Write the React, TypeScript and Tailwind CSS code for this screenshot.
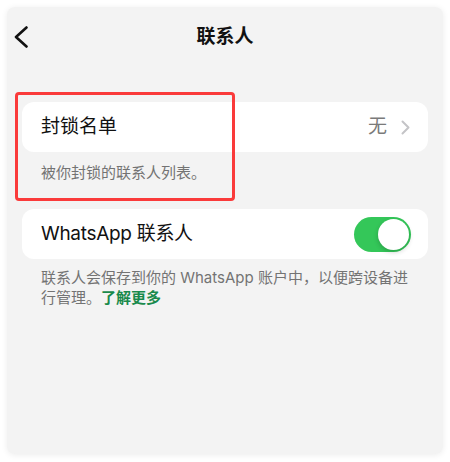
import { useState } from "react"

const font = { fontFamily: '"Inter", "Noto Sans CJK SC", sans-serif' }

function BackIcon() {
  return (
    <svg width="16" height="22" viewBox="0 0 16 22" fill="none">
      <path d="M13.5 1.5 L3 11 L13.5 20.5" stroke="#111" strokeWidth="2.6" strokeLinecap="round" strokeLinejoin="round" />
    </svg>
  )
}

function Chevron() {
  return (
    <svg width="9" height="15" viewBox="0 0 9 15" fill="none">
      <path d="M1.5 1.5 L7.5 7.5 L1.5 13.5" stroke="#c4c4c7" strokeWidth="2" strokeLinecap="round" strokeLinejoin="round" />
    </svg>
  )
}

function Toggle({ on, onChange }: { on: boolean; onChange: () => void }) {
  return (
    <button
      onClick={onChange}
      className={`relative h-[35px] w-[57px] rounded-full transition-colors ${on ? "bg-[#34c759]" : "bg-[#e5e5ea]"}`}
    >
      <span
        className={`absolute top-[2px] h-[31px] w-[31px] rounded-full bg-white shadow-[0_2px_5px_rgba(0,0,0,0.2)] transition-all ${on ? "left-[24px]" : "left-[2px]"}`}
      />
    </button>
  )
}

export default function App() {
  const [synced, setSynced] = useState(true)

  return (
    <div className="min-h-screen bg-white pl-[7px] pt-[7px]" style={font}>
      <div className="h-[447px] w-[436px] rounded-lg bg-[#f3f3f3] shadow-[0_1px_6px_rgba(0,0,0,0.08)]">
        {/* nav bar */}
        <div className="relative flex h-[60px] items-center justify-center">
          <button className="absolute left-[6px] top-[19px]">
            <BackIcon />
          </button>
          <h1 className="text-[19px] font-semibold text-[#111]">联系人</h1>
        </div>

        <div className="px-[15px] pt-[35px]">
          {/* blocked contacts */}
          <div className="relative">
            <div className="flex h-[50px] items-center justify-between rounded-xl bg-white pl-[19px] pr-[18px]">
              <span className="text-[19px] text-[#111]">封锁名单</span>
              <div className="flex items-center gap-[14px]">
                <span className="text-[19px] text-[#7a7a7a]">无</span>
                <Chevron />
              </div>
            </div>
            <p className="mt-[11px] px-[19px] text-[15px] leading-5 text-[#737373]">被你封锁的联系人列表。</p>
            <div className="pointer-events-none absolute left-[-7px] top-[-10px] h-[109px] w-[220px] rounded-[4px] border-[3px] border-[#fa3a3a]" />
          </div>

          {/* whatsapp contacts */}
          <div className="mt-[26px] flex h-[50px] items-center justify-between rounded-xl bg-white pl-[19px] pr-[17px]">
            <span className="text-[19px] tracking-[-0.3px] text-[#111]">WhatsApp 联系人</span>
            <Toggle on={synced} onChange={() => setSynced(!synced)} />
          </div>
          <div className="mt-[9px] px-[19px] text-[15px] leading-5 text-[#737373]">
            <span>联系人会保存到你的 WhatsApp 账户中，以便跨设备进行管理。</span>
            <a className="font-semibold text-[#1a8a4c]">了解更多</a>
          </div>
        </div>
      </div>
    </div>
  )
}
